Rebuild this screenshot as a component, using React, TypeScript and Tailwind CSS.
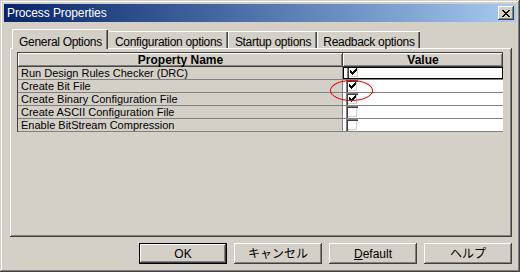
import React from "react";

const rows = [
  { name: "Run Design Rules Checker (DRC)", checked: true, focus: true },
  { name: "Create Bit File", checked: true },
  { name: "Create Binary Configuration File", checked: true },
  { name: "Create ASCII Configuration File", checked: false },
  { name: "Enable BitStream Compression", checked: false },
];

const raised =
  "shadow-[inset_-1px_-1px_#404040,inset_1px_1px_#ffffff,inset_-2px_-2px_#808080]";

const tabEdge = "shadow-[inset_-1px_0_#404040,inset_-2px_0_#808080]";

function CheckBox({ checked }: { checked: boolean }) {
  return (
    <div className="w-[12px] h-[12px] bg-white shadow-[inset_1px_1px_#808080,inset_2px_2px_#404040,inset_-1px_-1px_#ffffff,inset_-2px_-2px_#d4d0c8] relative shrink-0">
      {checked && (
        <svg className="absolute left-[3px] top-[2px]" width="7" height="7" viewBox="0 0 7 7" shapeRendering="crispEdges">
          <path d="M6 0h1v3h-1v1h-1v1h-1v1h-1v1h-1v-1h-1v-1h-1v-3h1v1h1v1h1v-1h1v-1h1z" fill="#000" />
        </svg>
      )}
    </div>
  );
}

function Button({ children, def }: { children: React.ReactNode; def?: boolean }) {
  return (
    <div className={"w-[88px] h-[21px] " + (def ? "border border-black" : "")}>
      <div
        className={
          "w-full h-full flex items-center justify-center text-[12px] text-black bg-[#d4d0c8] " +
          raised
        }
      >
        {children}
      </div>
    </div>
  );
}

export default function App() {
  return (
    <div
      className="relative w-[520px] h-[272px] bg-[#d4d0c8] p-[4px] flex flex-col shadow-[inset_-1px_-1px_#404040,inset_1px_1px_#d4d0c8,inset_-2px_-2px_#808080,inset_2px_2px_#ffffff] overflow-hidden"
      style={{ fontFamily: '"Liberation Sans", "Noto Sans CJK JP", sans-serif' }}
    >
      {/* title bar */}
      <div className="h-[18px] flex items-center justify-between pl-[3px] pr-[2px] bg-gradient-to-r from-[#0a246a] to-[#a6caf0]">
        <span className="text-white text-[12px] tracking-[-0.1px] leading-none">Process Properties</span>
        <div className={"w-[16px] h-[14px] bg-[#d4d0c8] flex items-center justify-center " + raised}>
          <svg width="8" height="7" viewBox="0 0 8 7" shapeRendering="crispEdges">
            <path d="M0 0h2v1h1v1h2v-1h1v-1h2v1h-1v1h-1v1h-1v1h1v1h1v1h1v1h-2v-1h-1v-1h-2v1h-1v1h-2v-1h1v-1h1v-1h1v-1h-1v-1h-1v-1h-1z" fill="#000" />
          </svg>
        </div>
      </div>

      {/* tabs */}
      <div className="flex items-end pl-[8px] mt-[7px] h-[19px] relative z-10 text-[12px] tracking-[-0.3px] text-black">
        <div className={"w-[96px] h-[20px] flex justify-center pt-[3px] bg-[#d4d0c8] border-l border-t border-white rounded-tl-[2px] mb-[-1px] " + tabEdge}>
          General Options
        </div>
        <div className={"w-[119px] h-[17px] flex justify-center pt-[1px] border-t border-white ml-[1px] " + tabEdge}>
          Configuration options
        </div>
        <div className={"w-[89px] h-[17px] flex justify-center pt-[1px] border-l border-t border-white " + tabEdge}>
          Startup options
        </div>
        <div className={"w-[103px] h-[17px] flex justify-center pt-[1px] border-l border-t border-white " + tabEdge}>
          Readback options
        </div>
      </div>

      {/* panel */}
      <div className={"ml-[6px] mr-[4px] h-[189px] pt-[4px] pl-[7px] pr-[9px] " + raised}>
        <div className="w-[486px] border-t border-l border-[#404040] text-[11px] text-black">
          <div className="flex h-[14px]">
            <div className={"w-[325px] flex items-center justify-center font-bold text-[12px] " + raised}>Property Name</div>
            <div className={"flex-1 flex items-center justify-center font-bold text-[12px] " + raised}>Value</div>
          </div>
          {rows.map((r) => (
            <div key={r.name} className="flex h-[13px] border-b border-[#808080]">
              <div className="w-[325px] pl-[3px] flex items-center border-r border-[#808080] leading-none">{r.name}</div>
              <div className={"flex-1 bg-white flex items-end overflow-hidden pl-[3px] " + (r.focus ? "border border-black pl-[2px]" : "")}>
                <CheckBox checked={r.checked} />
              </div>
            </div>
          ))}
        </div>
      </div>

      {/* buttons */}
      <div className="flex justify-end gap-[7px] mt-[6px] mr-[4px]">
        <Button def>OK</Button>
        <Button>キャンセル</Button>
        <Button>
          <span>
            <span className="underline">D</span>efault
          </span>
        </Button>
        <Button>ヘルプ</Button>
      </div>

      {/* red annotation */}
      <div className="absolute left-[330px] top-[80px] w-[43px] h-[21px] rounded-[50%] border border-[#e00000]" />
    </div>
  );
}
